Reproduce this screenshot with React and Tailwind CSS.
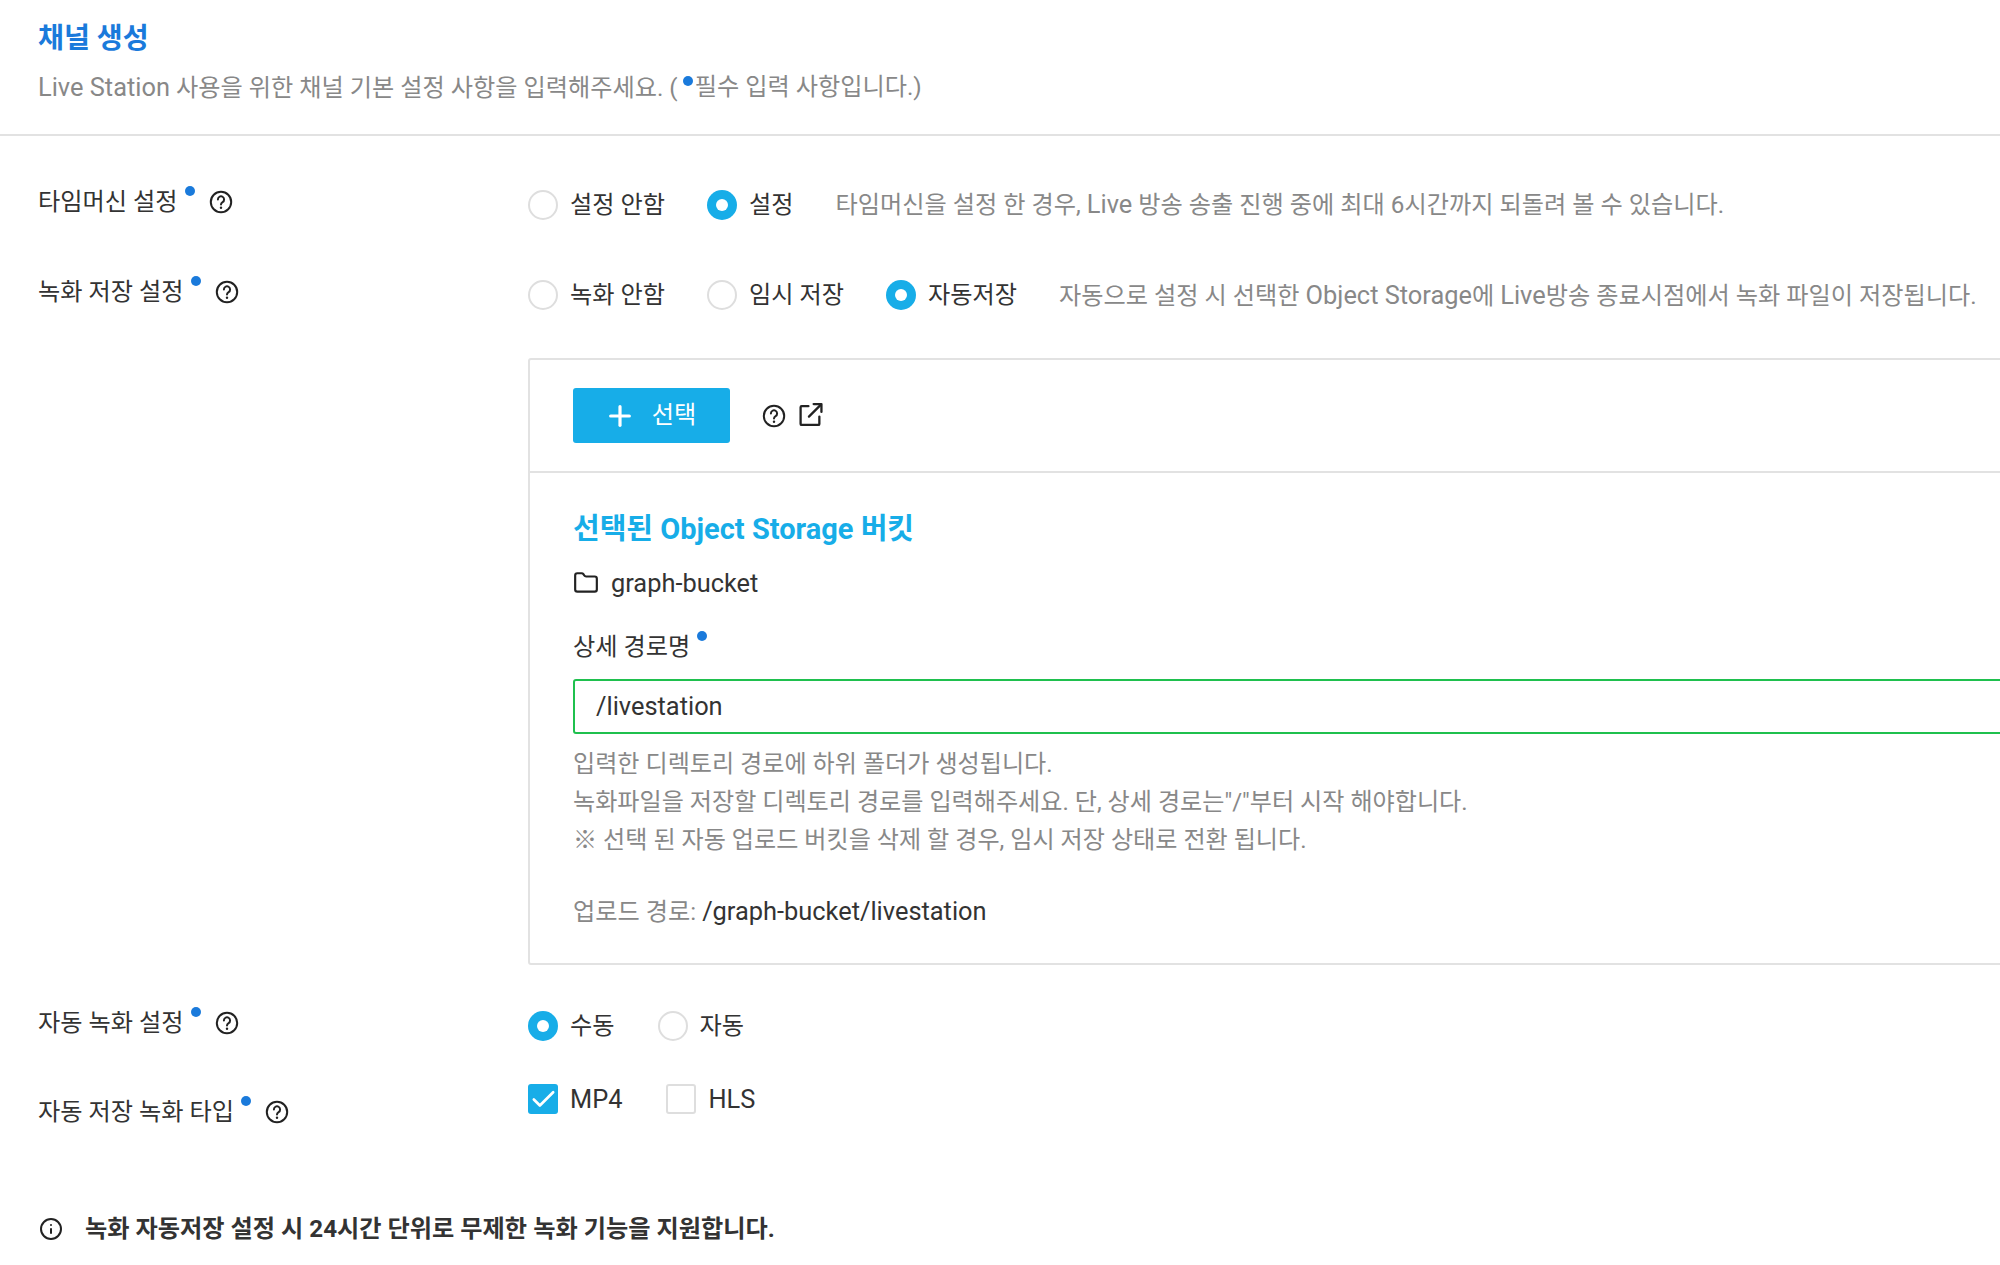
import { Check, Plus, Folder, Info } from 'lucide-react'

const font = { fontFamily: 'Roboto, "Noto Sans CJK KR", sans-serif' }

function Dot({ className = '' }) {
  return <span className={`inline-block w-[10px] h-[10px] rounded-full bg-[#1a7adb] ${className}`} />
}

function Latin({ children }) {
  return <span className="text-[25.4px]">{children}</span>
}

function Help({ size = 24 }) {
  return (
    <svg width={size} height={size} viewBox="0 0 24 24" fill="none" stroke="#222" strokeWidth="2" strokeLinecap="round" className="shrink-0">
      <circle cx="12" cy="12" r="10.2" />
      <path d="M8.9 9.4a3.1 3.1 0 1 1 4.7 2.7c-1 .6-1.6 1.2-1.6 2.4" />
      <path d="M12 17.6v.1" strokeWidth="2.4" />
    </svg>
  )
}

function ExternalLink() {
  return (
    <svg width="25" height="25" viewBox="0 0 24 24" fill="none" stroke="#222" strokeWidth="2.2" strokeLinecap="round" strokeLinejoin="round" className="shrink-0">
      <path d="M10 4H3.5a1 1 0 0 0-1 1v16a1 1 0 0 0 1 1h16a1 1 0 0 0 1-1v-7" />
      <path d="M10.5 14L22 2.5" />
      <path d="M15 2h7.5v7.5" />
    </svg>
  )
}

function Label({ text }) {
  return (
    <div className="flex items-center text-[24.2px] leading-[34px] text-[#333]">
      <span>{text}</span>
      <Dot className="self-start mt-[1px] ml-[7px]" />
      <span className="flex ml-[14px]"><Help /></span>
    </div>
  )
}

function Radio({ label, checked, className = '' }) {
  return (
    <label className={`flex items-center ${className}`}>
      {checked ? (
        <span className="w-[30px] h-[30px] rounded-full bg-[#17ade8] flex items-center justify-center shrink-0">
          <span className="w-[12px] h-[12px] rounded-full bg-white" />
        </span>
      ) : (
        <span className="w-[30px] h-[30px] rounded-full border-2 border-[#dedede] bg-white shrink-0" />
      )}
      <span className="ml-[12px] text-[24.2px] leading-[34px] text-[#333]">{label}</span>
    </label>
  )
}

function CheckBox({ label, checked, className = '' }) {
  return (
    <label className={`flex items-center ${className}`}>
      {checked ? (
        <span className="w-[30px] h-[30px] rounded-[3px] bg-[#17ade8] flex items-center justify-center shrink-0">
          <Check size={29} color="#fff" strokeWidth={2.2} />
        </span>
      ) : (
        <span className="w-[30px] h-[30px] rounded-[3px] border-2 border-[#dedede] bg-white shrink-0" />
      )}
      <span className="ml-[12px] text-[25.4px] leading-[34px] text-[#333]">{label}</span>
    </label>
  )
}

export default function App() {
  return (
    <div className="w-[2000px] h-[1265px] overflow-hidden bg-white" style={font}>
      <div className="pl-[38px] pt-[20px] h-[136px] border-b-2 border-[#e2e2e2]">
        <h1 className="text-[28.2px] leading-[38px] font-bold text-[#1a7adb]">채널 생성</h1>
        <p className="mt-[11px] text-[24.2px] leading-[36px] text-[#888] flex">
          <span className="whitespace-pre"><Latin>Live Station</Latin> 사용을 위한 채널 기본 설정 사항을 입력해주세요. (</span>
          <Dot className="mt-[7px] ml-[5px] mr-[2px]" />
          필수 입력 사항입니다.)
        </p>
      </div>

      {/* 타임머신 */}
      <div className="flex mt-[49px] pl-[38px]">
        <div className="w-[490px] shrink-0"><Label text="타임머신 설정" /></div>
        <div className="flex items-center h-[40px]">
          <Radio label="설정 안함" />
          <Radio label="설정" checked className="ml-[42px]" />
          <span className="ml-[42px] -mt-[2px] text-[24.2px] text-[#888] whitespace-nowrap">타임머신을 설정 한 경우, <Latin>Live</Latin> 방송 송출 진행 중에 최대 6시간까지 되돌려 볼 수 있습니다.</span>
        </div>
      </div>

      {/* 녹화 저장 */}
      <div className="flex mt-[50px] pl-[38px]">
        <div className="w-[490px] shrink-0"><Label text="녹화 저장 설정" /></div>
        <div className="flex items-center h-[40px]">
          <Radio label="녹화 안함" />
          <Radio label="임시 저장" className="ml-[42px]" />
          <Radio label="자동저장" checked className="ml-[42px]" />
          <span className="ml-[42px] text-[24.2px] text-[#888] whitespace-nowrap">자동으로 설정 시 선택한 <Latin>Object Storage</Latin>에 <Latin>Live</Latin>방송 종료시점에서 녹화 파일이 저장됩니다.</span>
        </div>
      </div>

      {/* 버킷 박스 */}
      <div className="ml-[528px] mt-[43px] w-[1600px] h-[607px] border-2 border-[#e2e2e2] rounded-[3px]">
        <div className="h-[113px] border-b-2 border-[#e2e2e2] flex items-center pl-[43px]">
          <button className="w-[157px] h-[55px] rounded-[3px] bg-[#17ade8] text-white flex items-center justify-center text-[24.2px]">
            <Plus size={32} strokeWidth={2.4} className="-ml-[3px]" />
            <span className="ml-[16px]">선택</span>
          </button>
          <span className="ml-[32px] flex"><Help /></span>
          <span className="ml-[12px] -mt-[2px] flex"><ExternalLink /></span>
        </div>
        <div className="pl-[43px] pt-[36px]">
          <h2 className="text-[29px] leading-[40px] font-bold text-[#17ade8]">선택된 Object Storage 버킷</h2>
          <div className="mt-[14px] flex items-center h-[40px]">
            <Folder size={26} color="#222" strokeWidth={2} />
            <span className="ml-[12px] text-[25.4px] text-[#333]">graph-bucket</span>
          </div>
          <div className="mt-[27px] flex text-[24.2px] leading-[34px] text-[#333]">
            상세 경로명<Dot className="ml-[7px] mt-[1px]" />
          </div>
          <div className="mt-[15px] h-[55px] border-2 border-[#1fc04e] rounded-[3px] flex items-center pl-[21px] text-[25.4px] text-[#333]">/livestation</div>
          <div className="mt-[11px] text-[24.1px] leading-[38px] text-[#888]">
            <p>입력한 디렉토리 경로에 하위 폴더가 생성됩니다.</p>
            <p>녹화파일을 저장할 디렉토리 경로를 입력해주세요. 단, 상세 경로는"/"부터 시작 해야합니다.</p>
            <p>※ 선택 된 자동 업로드 버킷을 삭제 할 경우, 임시 저장 상태로 전환 됩니다.</p>
          </div>
          <p className="mt-[33px] text-[24.2px] leading-[38px] text-[#888]">
            업로드 경로: <span className="text-[25.4px] text-[#333]">/graph-bucket/livestation</span>
          </p>
        </div>
      </div>

      {/* 자동 녹화 */}
      <div className="flex mt-[41px] pl-[38px]">
        <div className="w-[490px] shrink-0"><Label text="자동 녹화 설정" /></div>
        <div className="flex items-center h-[40px]">
          <Radio label="수동" checked />
          <Radio label="자동" className="ml-[43px]" />
        </div>
      </div>

      {/* 녹화 타입 */}
      <div className="flex mt-[34px] pl-[38px]">
        <div className="w-[490px] shrink-0 pt-[15px]"><Label text="자동 저장 녹화 타입" /></div>
        <div className="flex items-center h-[40px] -mt-[1px]">
          <CheckBox label="MP4" checked />
          <CheckBox label="HLS" className="ml-[44px]" />
        </div>
      </div>

      <div className="flex items-center mt-[82px] pl-[39px]">
        <Info size={24} color="#222" strokeWidth={2} />
        <span className="ml-[22px] text-[24.2px] font-bold text-[#333]">녹화 자동저장 설정 시 24시간 단위로 무제한 녹화 기능을 지원합니다.</span>
      </div>
    </div>
  )
}
